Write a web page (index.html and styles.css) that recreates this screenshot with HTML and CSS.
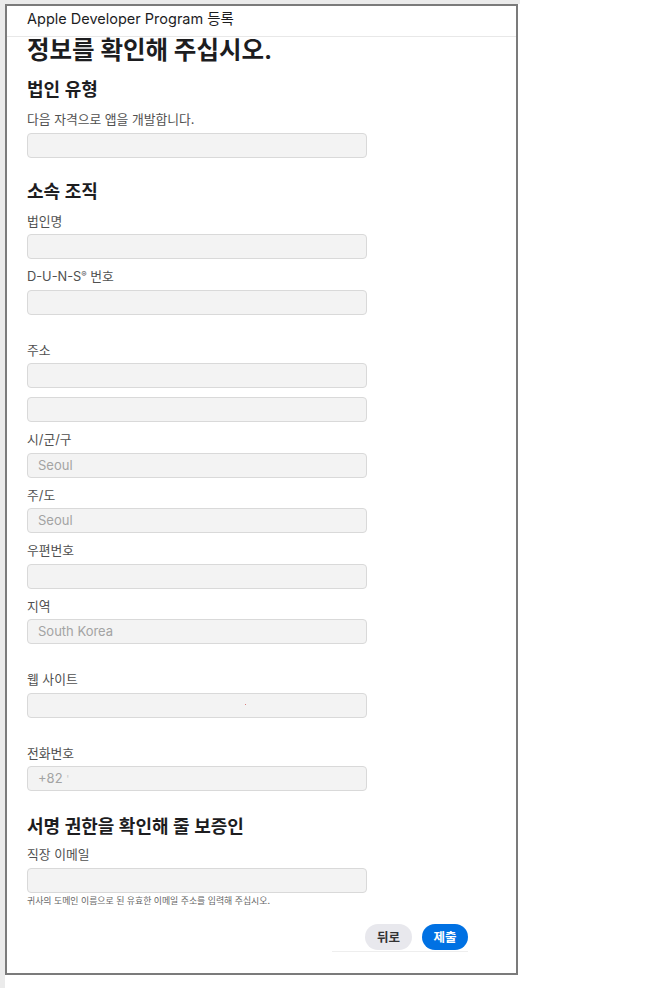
FILE: index.html
```html
<!DOCTYPE html>
<html lang="ko">
<head>
<meta charset="utf-8">
<title>Apple Developer Program 등록</title>
<link rel="stylesheet" href="styles.css">
</head>
<body>
<div class="backdrop">
  <div class="window">
    <header class="topbar">Apple Developer Program 등록</header>
    <main class="content">
      <h1 class="title">정보를 확인해 주십시오.</h1>

      <h2 class="section first">법인 유형</h2>
      <div class="field">
        <div class="label">다음 자격으로 앱을 개발합니다.</div>
        <div class="input"></div>
      </div>

      <h2 class="section">소속 조직</h2>
      <div class="field">
        <div class="label">법인명</div>
        <div class="input"></div>
      </div>
      <div class="field">
        <div class="label">D-U-N-S<sup class="reg">®</sup> 번호</div>
        <div class="input"></div>
      </div>

      <div class="field group">
        <div class="label">주소</div>
        <div class="input"></div>
        <div class="input second"></div>
      </div>
      <div class="field">
        <div class="label">시/군/구</div>
        <div class="input">Seoul</div>
      </div>
      <div class="field">
        <div class="label">주/도</div>
        <div class="input">Seoul</div>
      </div>
      <div class="field">
        <div class="label">우편번호</div>
        <div class="input"></div>
      </div>
      <div class="field">
        <div class="label">지역</div>
        <div class="input">South Korea</div>
      </div>

      <div class="field group">
        <div class="label">웹 사이트</div>
        <div class="input"><span class="speck"></span></div>
      </div>

      <div class="field group">
        <div class="label">전화번호</div>
        <div class="input">+82 <span class="tick">'</span></div>
      </div>

      <h2 class="section last">서명 권한을 확인해 줄 보증인</h2>
      <div class="field">
        <div class="label">직장 이메일</div>
        <div class="input"></div>
        <div class="help">귀사의 도메인 이름으로 된 유효한 이메일 주소를 입력해 주십시오.</div>
      </div>

      <div class="actions">
        <div class="buttons">
          <button class="btn back">뒤로</button>
          <button class="btn submit">제출</button>
        </div>
      </div>
    </main>
  </div>
</div>
</body>
</html>
```

FILE: styles.css
```css
* { box-sizing: border-box; }
html, body {
  margin: 0;
  padding: 0;
  background: #ffffff;
}
body {
  font-family: "Inter", "Noto Sans CJK KR", sans-serif;
  color: #1d1d1f;
}
.backdrop {
  width: 520px;
  height: 988px;
  border-top: 4px solid #ebebeb;
  border-left: 5px solid #ebebeb;
  background: #ffffff;
}
.window {
  width: 513px;
  height: 971px;
  border: 2px solid #7b7b7b;
  background: #ffffff;
  overflow: hidden;
}
.topbar {
  height: 31px;
  border-bottom: 1px solid #e8e8e8;
  padding: 3px 0 0 20px;
  font-size: 14.5px;
  line-height: 20px;
  color: #1d1d1f;
}
.content {
  padding: 0 0 0 20px;
}
.title {
  margin: 0;
  font-size: 24.5px;
  line-height: 26px;
  font-weight: 700;
  color: #1d1d1f;
}
.section {
  margin: 23px 0 10px;
  font-size: 18px;
  line-height: 22px;
  font-weight: 600;
  color: #1d1d1f;
}
.section.first { margin-top: 16px; }
.section.last { margin-top: 25px; margin-bottom: 8px; }
.field { margin-bottom: 9px; }
.field.group { margin-top: 27px; }
.label {
  font-size: 12.8px;
  line-height: 18px;
  color: #505050;
  margin-bottom: 3.5px;
}
.reg {
  font-size: 8px;
  vertical-align: 4px;
  line-height: 0;
}
.input {
  position: relative;
  width: 340px;
  height: 25px;
  border: 1px solid #d9d9d9;
  border-radius: 4px;
  background: #f3f3f3;
  padding: 0 10px;
  font-size: 13px;
  line-height: 23px;
  color: #a3a3a3;
}
.input.second { margin-top: 9px; }
.speck {
  position: absolute;
  left: 217px;
  top: 10px;
  width: 1px;
  height: 1px;
  background: #d98080;
}
.tick { color: #c8c8c8; font-size: 10px; }
.help {
  margin-top: 2px;
  font-size: 8.9px;
  line-height: 12px;
  color: #666666;
}
.actions {
  width: 441px;
  display: flex;
  justify-content: flex-end;
  margin-top: 17px;
}
.buttons {
  display: flex;
  gap: 10px;
  padding-left: 33px;
  padding-bottom: 1px;
  border-bottom: 1px solid #eeeeee;
}
.btn {
  height: 26px;
  border: none;
  border-radius: 13px;
  padding: 0;
  font-family: "Inter", "Noto Sans CJK KR", sans-serif;
  font-size: 12.5px;
  font-weight: 600;
}
.back {
  width: 47px;
  background: #e8e8ed;
  color: #333333;
}
.submit {
  width: 46px;
  background: #0071e3;
  color: #ffffff;
}
```
